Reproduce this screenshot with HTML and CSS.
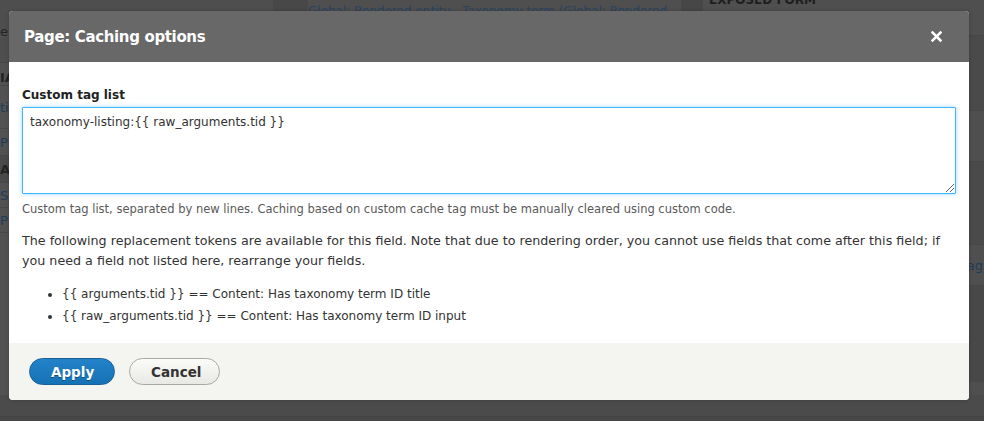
FILE: index.html
```html
<!DOCTYPE html>
<html lang="en">
<head>
<meta charset="utf-8">
<title>Page: Caching options</title>
<link rel="stylesheet" href="styles.css">
</head>
<body>
<div class="backdrop">
  <div class="col col-left">
    <div class="brow r1"><span class="bt">e</span></div>
    <div class="brow r2"><span class="bt bold">IA</span></div>
    <div class="brow r3"><span class="bt link">ti</span></div>
    <div class="brow r4"><span class="bt link">P</span></div>
    <div class="brow r5"><span class="bt bold">A</span></div>
    <div class="brow r6"><span class="bt link">S</span></div>
    <div class="brow r7"><span class="bt link">P</span></div>
  </div>
  <div class="col col-gap"></div>
  <div class="col col-mid">
    <div class="mid-text">Global: Rendered entity - Taxonomy term (Global: Rendered</div>
  </div>
  <div class="col col-gap2"></div>
  <div class="col col-right">
    <div class="exposed">EXPOSED FORM</div>
    <div class="rrow s1"></div>
    <div class="rrow s2"></div>
    <div class="rrow s3"></div>
    <div class="rrow s4"><span class="bt link tag">tag</span></div>
    <div class="rrow s5"></div>
  </div>
  <div class="base-line"></div>
</div>

<div class="dialog" role="dialog" aria-labelledby="dlg-title">
  <div class="dialog-titlebar">
    <span class="dialog-title" id="dlg-title">Page: Caching options</span>
    <button class="dialog-close" type="button" aria-label="Close">
      <svg width="11" height="11" viewBox="0 0 11 11"><path d="M1.5 1.5 L9.5 9.5 M9.5 1.5 L1.5 9.5" stroke="#fff" stroke-width="2.5" stroke-linecap="square"/></svg>
    </button>
  </div>
  <div class="dialog-content">
    <label class="field-label" for="tags">Custom tag list</label>
    <div class="textarea-wrap">
      <textarea id="tags" class="field-text" spellcheck="false">taxonomy-listing:{{ raw_arguments.tid }}</textarea>
      <span class="grip"></span>
    </div>
    <div class="description">Custom tag list, separated by new lines. Caching based on custom cache tag must be manually cleared using custom code.</div>
    <p class="tokens">The following replacement tokens are available for this field. Note that due to rendering order, you cannot use fields that come after this field; if you need a field not listed here, rearrange your fields.</p>
    <ul class="token-list">
      <li>{{ arguments.tid }} == Content: Has taxonomy term ID title</li>
      <li>{{ raw_arguments.tid }} == Content: Has taxonomy term ID input</li>
    </ul>
  </div>
  <div class="dialog-buttons">
    <button class="btn btn-primary" type="button">Apply</button>
    <button class="btn btn-secondary" type="button">Cancel</button>
  </div>
</div>
</body>
</html>
```

FILE: styles.css
```css
html, body {
  margin: 0;
  padding: 0;
  width: 984px;
  height: 421px;
  overflow: hidden;
  background: #4b4b4b;
  font-family: "DejaVu Sans", "Liberation Sans", sans-serif;
}

/* ---------- dimmed page behind the dialog ---------- */
.backdrop {
  display: flex;
  align-items: flex-start;
  height: 421px;
  position: relative;
}
.col { height: 395px; }
.col-left { width: 273px; background: #525252; }
.col-gap { width: 35px; background: #484848; }
.col-mid { width: 373px; background: #4f4f4f; }
.col-gap2 { width: 22px; background: #474747; }
.col-right { flex: 1; background: #4f4f4f; }
.base-line {
  position: absolute;
  left: 0; right: 0; top: 416px;
  height: 5px;
  background: #474747;
  border-top: 1px solid #424242;
}
.bt { font-size: 13px; color: #232323; }
.bt.bold { font-weight: bold; }
.bt.link { color: #1f3b57; }
.brow { border-bottom: 1px solid #474747; display: flex; align-items: center; }
.r1 { height: 62px; background: #4e4e4e; }
.r2 { height: 22px; align-items: flex-end; }
.r3 { height: 42px; }
.r4 { height: 26px; }
.r5 { height: 26px; background: #4a4a4a; }
.r6 { height: 24px; }
.r7 { height: 24px; }

.mid-text {
  font-size: 12px;
  color: #2b4461;
  padding: 4px 0 0 0;
  white-space: nowrap;
}
.exposed {
  font-size: 12px;
  font-weight: bold;
  color: #1e1e1e;
  padding: 0 0 0 6px;
  margin-top: -7px;
  height: 42px;
  border-bottom: 1px solid #474747;
}
.rrow { border-bottom: 1px solid #474747; display: flex; align-items: center; justify-content: flex-end; }
.s1 { height: 74px; background: #4a4a4a; }
.s2 { height: 50px; }
.s3 { height: 82px; background: #4a4a4a; }
.s4 { height: 40px; }
.s5 { height: 95px; background: #484848; }
.tag { padding-right: 1px; }

/* ---------- dialog ---------- */
.dialog {
  position: absolute;
  left: 9px;
  top: 11px;
  width: 960px;
  height: 389px;
  background: #fff;
  border-radius: 4px;
  overflow: hidden;
  display: flex;
  flex-direction: column;
  box-shadow: 0 0 4px rgba(0, 0, 0, 0.2);
}
.dialog-titlebar {
  height: 51px;
  background: #686868;
  display: flex;
  align-items: center;
  justify-content: space-between;
  padding: 0 27px 0 15px;
  box-sizing: border-box;
  flex: none;
}
.dialog-title {
  color: #fff;
  font-weight: bold;
  font-size: 15px;
  letter-spacing: -0.35px;
  padding-top: 1px;
}
.dialog-close {
  background: none;
  border: 0;
  padding: 0;
  width: 11px;
  height: 11px;
  display: block;
}
.dialog-close svg { display: block; }

.dialog-content {
  flex: 1;
  padding: 24px 13px 0 13px;
  color: #333;
  font-size: 12px;
}
.field-label {
  display: block;
  font-weight: bold;
  font-size: 12px;
  line-height: 18px;
  color: #222;
  margin-bottom: 3px;
}
.textarea-wrap { position: relative; }
.field-text {
  display: block;
  box-sizing: border-box;
  width: 934px;
  height: 87px;
  margin: 0;
  padding: 6px 7px;
  border: 1px solid #40b6ff;
  box-shadow: 0 0 4px #9bd6ff;
  border-radius: 1px;
  font-family: "DejaVu Sans", "Liberation Sans", sans-serif;
  font-size: 12px;
  line-height: 16px;
  color: #333;
  resize: none;
  outline: none;
}
.grip {
  position: absolute;
  right: 2px;
  bottom: 2px;
  width: 8px;
  height: 8px;
  background: linear-gradient(135deg, transparent 45%, #666 45%, #666 52%, transparent 52%, transparent 70%, #666 70%, #666 77%, transparent 77%);
}
.description {
  margin-top: 7px;
  font-size: 11.5px;
  line-height: 16px;
  color: #595959;
}
.tokens {
  margin: 14px 0 0 0;
  font-size: 12.7px;
  line-height: 20px;
}
.token-list {
  margin: 13px 0 0 0;
  padding-left: 40px;
  line-height: 20px;
}
.token-list li { margin-bottom: 2px; }

.dialog-buttons {
  flex: none;
  height: 57px;
  background: #f4f4f1;
  display: flex;
  align-items: flex-start;
  gap: 14px;
  padding: 15px 0 0 20px;
  box-sizing: border-box;
}
.btn {
  height: 27px;
  border-radius: 14px;
  font-family: "DejaVu Sans", "Liberation Sans", sans-serif;
  font-weight: bold;
  font-size: 13.5px;
  padding: 0 21px;
  cursor: pointer;
}
.btn-primary {
  width: 86px;
  color: #fff;
  background: linear-gradient(#2383c9, #1572b4);
  border: 1px solid #1a5f96;
  text-shadow: 0 1px 0 rgba(0, 0, 0, 0.35);
}
.btn-secondary {
  width: 91px;
  color: #333;
  background: linear-gradient(#fbfbf9, #e8e8e4);
  border: 1px solid #a8a8a5;
}
```
